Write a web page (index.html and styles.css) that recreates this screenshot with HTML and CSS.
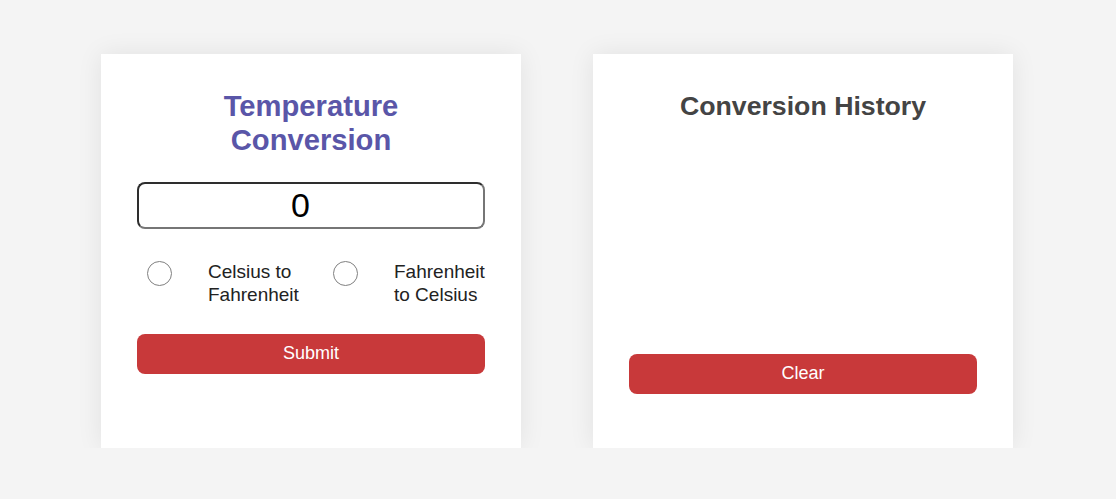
FILE: index.html
```html
<!DOCTYPE html>
<html lang="en">
<head>
<meta charset="utf-8">
<title>Temperature Conversion</title>
<link rel="stylesheet" href="styles.css">
</head>
<body>
<main class="app">
  <section class="card converter">
    <h1 class="title">Temperature Conversion</h1>
    <input class="temp-input" type="number" value="0">
    <div class="options">
      <input class="radio" type="radio" name="mode" id="c2f">
      <label class="option-label" for="c2f">Celsius to Fahrenheit</label>
      <input class="radio" type="radio" name="mode" id="f2c">
      <label class="option-label" for="f2c">Fahrenheit to Celsius</label>
    </div>
    <button class="btn" type="button">Submit</button>
  </section>
  <section class="card history">
    <h2 class="history-title">Conversion History</h2>
    <ul class="history-list"></ul>
    <button class="btn" type="button">Clear</button>
  </section>
</main>
</body>
</html>
```
FILE: styles.css
```css
html, body {
  margin: 0;
  padding: 0;
}
body {
  background: #f4f4f4;
  font-family: "Liberation Sans", Arial, sans-serif;
  color: #222;
}
.app {
  display: flex;
  justify-content: center;
  align-items: stretch;
  gap: 72px;
  padding: 54px 2px 0 0;
}
.card {
  width: 420px;
  box-sizing: border-box;
  background: #fff;
  padding: 35px 36px 54px;
  box-shadow: 0 0 24px rgba(0, 0, 0, 0.08);
  display: flex;
  flex-direction: column;
}
.title {
  margin: 0 auto;
  max-width: 300px;
  font-size: 29.2px;
  line-height: 34px;
  font-weight: bold;
  color: #5a56a8;
  text-align: center;
}
.temp-input {
  margin: 25px 0 0;
  height: 47px;
  box-sizing: border-box;
  width: 100%;
  padding: 2px 8px 2px 2px;
  border: 2px solid;
  border-color: #2e2e2e #767676 #767676 #2e2e2e;
  border-radius: 8px;
  font-family: "Liberation Sans", Arial, sans-serif;
  font-size: 34px;
  line-height: 39px;
  text-align: center;
  color: #000;
  background: #fff;
}
.options {
  margin-top: 32px;
  display: grid;
  grid-template-columns: 25px 89px 25px 1fr;
  column-gap: 36px;
  padding-left: 10px;
  align-items: start;
}
.radio {
  appearance: none;
  -webkit-appearance: none;
  margin: 0;
  width: 25px;
  height: 25px;
  border: 1px solid #808080;
  border-radius: 50%;
  background: #fff;
  box-sizing: border-box;
}
.option-label {
  font-size: 19px;
  line-height: 22.5px;
  color: #222;
  white-space: normal;
}
.btn {
  margin-top: 28px;
  height: 40px;
  width: 100%;
  border: none;
  border-radius: 8px;
  background: #c8393a;
  color: #fff;
  font-family: "Liberation Sans", Arial, sans-serif;
  font-size: 18px;
  line-height: 38px;
  padding: 0 0 2px;
  cursor: pointer;
}
.history-title {
  margin: 0;
  font-size: 26.7px;
  line-height: 34px;
  font-weight: bold;
  color: #444;
  text-align: center;
}
.history-list {
  list-style: none;
  margin: 0;
  padding: 0;
  height: 231px;
}
.history .btn {
  margin-top: 0;
}
```
